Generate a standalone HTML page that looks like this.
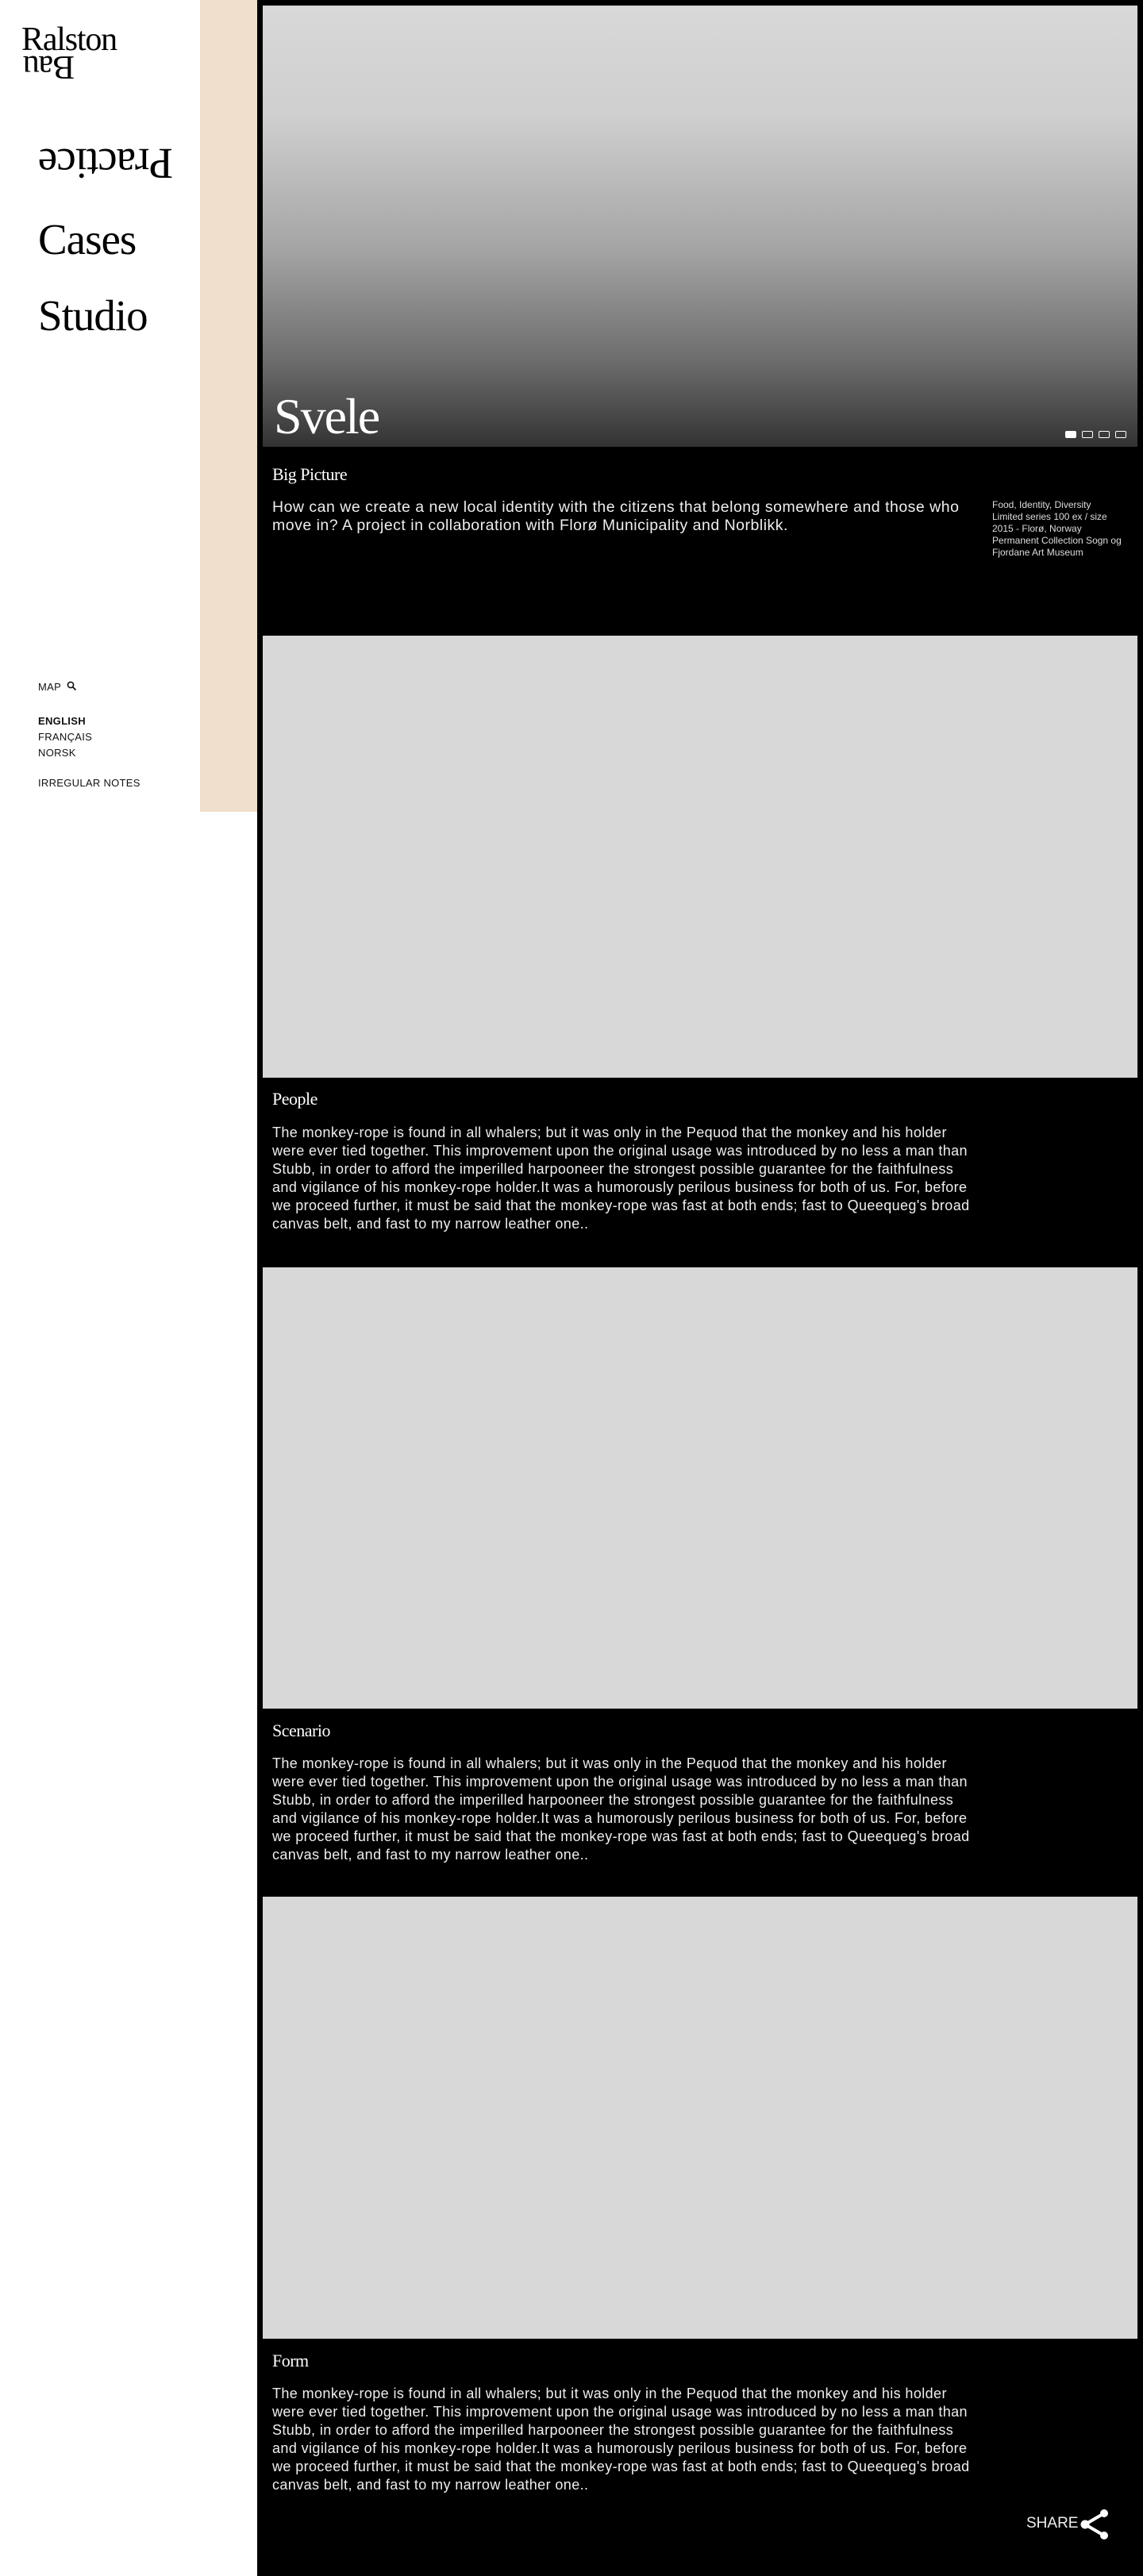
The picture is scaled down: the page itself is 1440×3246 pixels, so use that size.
<!DOCTYPE html>
<html><head><meta charset="utf-8"><style>
*{margin:0;padding:0;box-sizing:border-box}
body{width:1440px;height:3246px;background:#fff;position:relative;overflow:hidden;font-family:"Liberation Sans",sans-serif}
.abs{position:absolute}
.serif{font-family:"Liberation Serif",serif}
#beige{left:252px;top:0;width:72px;height:1023px;background:#f0dfcc}
#panel{left:324px;top:0;width:1116px;height:3246px;background:#000}
.img{left:331px;width:1102px;background:#d8d8d8}
.nav{left:48px;font-size:55px;color:#000;letter-spacing:-1px}
.small{left:48px;font-size:13px;color:#111;letter-spacing:0.3px}
.h{left:343px;color:#fff;font-size:22px;letter-spacing:-0.5px}
.p{left:343px;width:880px;color:#eee;font-size:18px;line-height:23px;letter-spacing:0.4px}
</style></head><body>
<div id="beige" class="abs"></div>
<div id="panel" class="abs"></div>

<div class="abs serif" style="left:27px;top:28px;font-size:42px;line-height:44px;letter-spacing:-1.2px">Ralston</div>
<div class="abs serif" style="left:28px;top:62px;font-size:42px;line-height:44px;letter-spacing:-1.2px;transform:rotate(180deg);width:66px;text-align:left;white-space:nowrap">Bau</div>
<div class="abs serif nav" style="top:175px;transform:rotate(180deg);width:170px;text-align:left">Practice</div>
<div class="abs serif nav" style="top:270px">Cases</div>
<div class="abs serif nav" style="top:366px">Studio</div>

<div class="abs small" style="top:858px">MAP <svg width="13" height="13" viewBox="0 0 13 13" style="vertical-align:-1px;margin-left:3px"><circle cx="5" cy="5" r="3.6" fill="none" stroke="#111" stroke-width="1.6"/><path d="M7.7 7.7L11.5 11.5" stroke="#111" stroke-width="1.8"/></svg></div>
<div class="abs small" style="top:901px;font-weight:bold">ENGLISH</div>
<div class="abs small" style="top:921px">FRANÇAIS</div>
<div class="abs small" style="top:941px">NORSK</div>
<div class="abs small" style="top:979px">IRREGULAR NOTES</div>

<div class="abs img" style="top:7px;height:556px;background:linear-gradient(#d8d8d8 0%,#cfcfcf 25%,#a5a5a5 55%,#6e6e6e 80%,#333 100%)"></div>
<div class="abs serif" style="left:345px;top:490px;font-size:64px;color:#fff;letter-spacing:-2px;line-height:70px">Svele</div>
<div class="abs" style="left:1342px;top:543px;width:14px;height:9px;background:#fff;border-radius:2px"></div>
<div class="abs" style="left:1363px;top:543px;width:14px;height:9px;border:1.5px solid #fff;border-radius:2px"></div>
<div class="abs" style="left:1384px;top:543px;width:14px;height:9px;border:1.5px solid #fff;border-radius:2px"></div>
<div class="abs" style="left:1405px;top:543px;width:14px;height:9px;border:1.5px solid #fff;border-radius:2px"></div>

<div class="abs serif h" style="top:585px">Big Picture</div>
<div class="abs p" style="top:628px;font-size:19.5px;width:880px;line-height:23px;letter-spacing:0.5px">How can we create a new local identity with the citizens that belong somewhere and those who move in? A project in collaboration with Florø Municipality and Norblikk.</div>
<div class="abs" style="left:1250px;top:629px;width:175px;color:#ddd;font-size:12px;line-height:15px">Food, Identity, Diversity<br>Limited series 100 ex / size<br>2015 - Florø, Norway<br>Permanent Collection Sogn og Fjordane Art Museum</div>

<div class="abs img" style="top:801px;height:557px"></div>
<div class="abs serif h" style="top:1372px">People</div>
<div class="abs p" style="top:1416px">The monkey-rope is found in all whalers; but it was only in the Pequod that the monkey and his holder were ever tied together. This improvement upon the original usage was introduced by no less a man than Stubb, in order to afford the imperilled harpooneer the strongest possible guarantee for the faithfulness and vigilance of his monkey-rope holder.It was a humorously perilous business for both of us. For, before we proceed further, it must be said that the monkey-rope was fast at both ends; fast to Queequeg's broad canvas belt, and fast to my narrow leather one..</div>

<div class="abs img" style="top:1597px;height:556px"></div>
<div class="abs serif h" style="top:2168px">Scenario</div>
<div class="abs p" style="top:2211px">The monkey-rope is found in all whalers; but it was only in the Pequod that the monkey and his holder were ever tied together. This improvement upon the original usage was introduced by no less a man than Stubb, in order to afford the imperilled harpooneer the strongest possible guarantee for the faithfulness and vigilance of his monkey-rope holder.It was a humorously perilous business for both of us. For, before we proceed further, it must be said that the monkey-rope was fast at both ends; fast to Queequeg's broad canvas belt, and fast to my narrow leather one..</div>

<div class="abs img" style="top:2390px;height:557px"></div>
<div class="abs serif h" style="top:2962px">Form</div>
<div class="abs p" style="top:3005px">The monkey-rope is found in all whalers; but it was only in the Pequod that the monkey and his holder were ever tied together. This improvement upon the original usage was introduced by no less a man than Stubb, in order to afford the imperilled harpooneer the strongest possible guarantee for the faithfulness and vigilance of his monkey-rope holder.It was a humorously perilous business for both of us. For, before we proceed further, it must be said that the monkey-rope was fast at both ends; fast to Queequeg's broad canvas belt, and fast to my narrow leather one..</div>

<div class="abs" style="left:1293px;top:3169px;color:#eee;font-size:19px">SHARE</div>
<svg class="abs" style="left:1360px;top:3161px" width="40" height="40" viewBox="0 0 40 40"><path d="M7 20L31 6M7 20L31 34" stroke="#fff" stroke-width="4"/><circle cx="7" cy="20" r="5.5" fill="#fff"/><circle cx="31" cy="6" r="5" fill="#fff"/><circle cx="31" cy="34" r="5" fill="#fff"/></svg>
</body></html>
